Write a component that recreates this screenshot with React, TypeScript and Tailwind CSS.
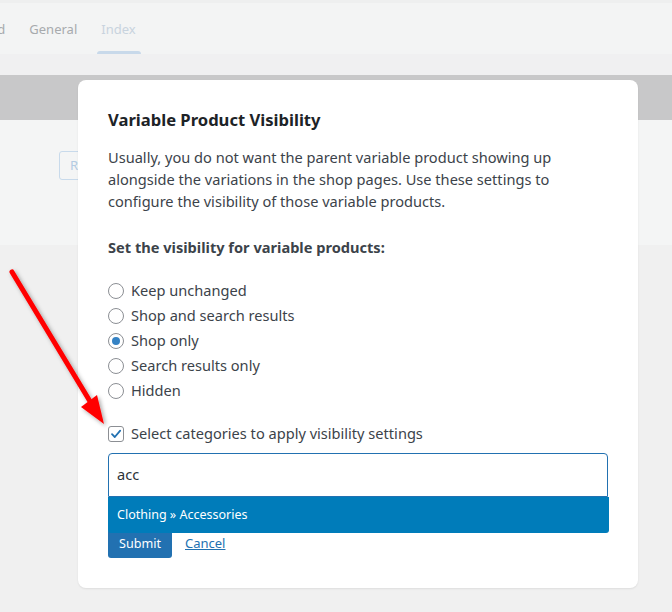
import React from "react";

const radios = [
  { label: "Keep unchanged", checked: false },
  { label: "Shop and search results", checked: false },
  { label: "Shop only", checked: true },
  { label: "Search results only", checked: false },
  { label: "Hidden", checked: false },
];

export default function App() {
  return (
    <div
      className="relative w-[672px] h-[612px] overflow-hidden bg-[#f0f0f0]"
      style={{ fontFamily: '"Noto Sans", "Open Sans", sans-serif' }}
    >
      {/* background page */}
      <div className="h-[3px] bg-[#eeefef]" />
      <div className="h-[51px] bg-[#f3f4f4] flex items-stretch text-[13px] text-[#a7aaad]">
        <div className="flex gap-6 -ml-[62px]">
          <div className="flex items-center pt-[2px]">Dashboard</div>
          <div className="flex items-center pt-[2px]">General</div>
          <div className="relative flex items-center pt-[2px] text-[#c8d3de]">
            Index
            <span className="absolute -left-[4px] -right-[5px] bottom-0 h-[3px] rounded-t-sm bg-[#c8d9ea]" />
          </div>
        </div>
      </div>
      <div className="h-[21px] bg-[#f0f0f1]" />
      <div className="h-[45px] bg-[#c8c8c9]" />
      <div className="h-[125px] bg-[#f4f5f5] relative">
        <div className="pt-[31px] pl-[59px]">
          <div className="w-[40px] h-[29px] border border-[#c8daeb] rounded-[3px] flex items-center pl-[10px] text-[13px] text-[#b3cbe3]">
            R
          </div>
        </div>
      </div>

      {/* modal */}
      <div className="absolute left-[78px] top-[80px] w-[560px] h-[508px] bg-white rounded-[8px] shadow-[0_1px_2px_rgba(0,0,0,0.08)] px-[30px] pt-[28px] text-[14.6px] text-[#3c434a]">
        <h2 className="text-[16.6px] leading-[24px] font-bold text-[#1d2327]">
          Variable Product Visibility
        </h2>
        <p className="mt-[14px] leading-[22px] max-w-[480px]">
          Usually, you do not want the parent variable product showing up alongside the variations in the shop pages. Use these settings to configure the visibility of those variable products.
        </p>
        <p className="mt-[24px] leading-[22px] font-bold text-[#3c434a]">
          Set the visibility for variable products:
        </p>
        <div className="mt-[20px] flex flex-col">
          {radios.map((r) => (
            <label key={r.label} className="h-[25px] flex items-center gap-[7px]">
              <span className="w-[16px] h-[16px] rounded-full border border-[#8c8f94] bg-white flex items-center justify-center">
                {r.checked && <span className="w-[8px] h-[8px] rounded-full bg-[#3582c4]" />}
              </span>
              <span>{r.label}</span>
            </label>
          ))}
        </div>
        <label className="mt-[18px] h-[25px] flex items-center gap-[7px]">
          <span className="w-[16px] h-[16px] rounded-[3px] border border-[#8c8f94] bg-white flex items-center justify-center">
            <svg width="12" height="12" viewBox="0 0 12 12">
              <path d="M2 6.2 L4.8 9 L10.2 2.6" fill="none" stroke="#2271b1" strokeWidth="1.8" strokeLinecap="round" strokeLinejoin="round" />
            </svg>
          </span>
          <span>Select categories to apply visibility settings</span>
        </label>
        <div className="relative mt-[7px]">
          <div className="h-[44px] border border-[#2271b1] rounded-t-[4px] flex items-center pl-[8px] text-[#2c3338]">
            acc
          </div>
          <div className="absolute left-0 top-[44px] w-[501px] h-[36px] bg-[#007cba] rounded-b-[3px] flex items-center pl-[9px] text-[12.5px] text-white z-10">
            Clothing » Accessories
          </div>
        </div>
        <div className="mt-[32px] flex items-center gap-[13px]">
          <button className="h-[29px] w-[64px] bg-[#2271b1] rounded-[3px] text-white text-[12.6px] flex items-center justify-center pt-[2px]">
            Submit
          </button>
          <a className="text-[13px] text-[#2271b1] underline">Cancel</a>
        </div>
      </div>

      {/* red arrow annotation */}
      <svg className="absolute left-0 top-0 pointer-events-none" width="672" height="612">
        <defs>
          <filter id="sh" x="-20%" y="-20%" width="140%" height="140%">
            <feDropShadow dx="2" dy="2" stdDeviation="2" floodColor="#000" floodOpacity="0.35" />
          </filter>
        </defs>
        <g filter="url(#sh)">
          <line x1="12" y1="272" x2="91" y2="403" stroke="#ff0000" strokeWidth="5" strokeLinecap="round" />
          <polygon points="81,407 97,395 104,424" fill="#ff0000" />
        </g>
      </svg>
    </div>
  );
}
